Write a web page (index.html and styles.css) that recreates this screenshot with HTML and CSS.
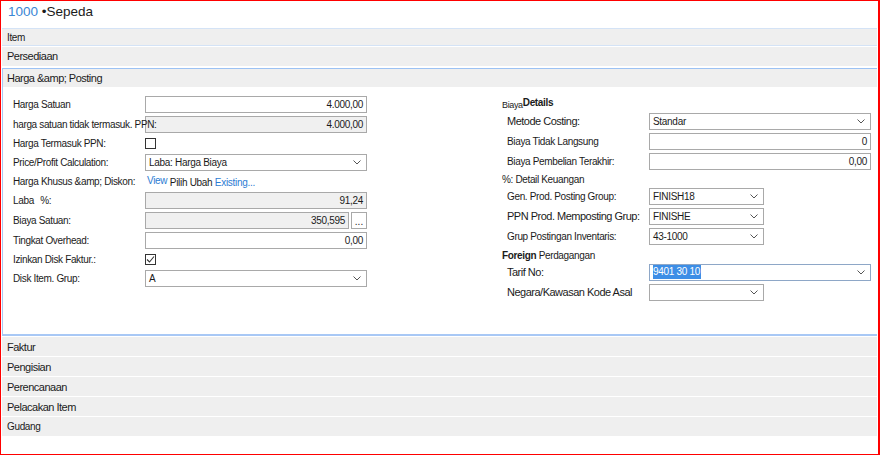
FILE: index.html
```html
<!DOCTYPE html>
<html lang="id">
<head>
  <meta charset="UTF-8" />
  <title>1000 Sepeda</title>
  <link rel="stylesheet" href="styles.css">
</head>
<body>
  <div class="frame">
    <div class="title"><span class="no">1000</span> •Sepeda</div>
    <div class="section small first">Item</div>
    <div class="section split">Persediaan</div>

    <div class="panel">
      <div class="panel-head">Harga &amp;amp; Posting</div>
      <div class="panel-body">
        <!-- left column -->
        <div class="col left">
          <div class="row">
            <span class="label">Harga Satuan</span>
            <div class="field num wide">4.000,00</div>
          </div>
          <div class="row">
            <span class="label over">harga satuan tidak termasuk. PPN:</span>
            <div class="field num wide readonly">4.000,00</div>
          </div>
          <div class="row short">
            <span class="label">Harga Termasuk PPN:</span>
            <span class="check"></span>
          </div>
          <div class="row">
            <span class="label">Price/Profit Calculation:</span>
            <div class="field select wide">Laba: Harga Biaya
              <svg class="chev" width="8" height="5" viewBox="0 0 8 5"><path d="M0.5 0.5L4 4L7.5 0.5" fill="none" stroke="#555" stroke-width="1"/></svg>
            </div>
          </div>
          <div class="row short">
            <span class="label">Harga Khusus &amp;amp; Diskon:</span>
            <span class="links"><span class="link up">View</span> Pilih Ubah <span class="link">Existing...</span></span>
          </div>
          <div class="row">
            <span class="label">Laba <span class="pct">%:</span></span>
            <div class="field num wide readonly">91,24</div>
          </div>
          <div class="row">
            <span class="label">Biaya Satuan:</span>
            <div class="field num mid readonly">350,595</div>
            <span class="dots">...</span>
          </div>
          <div class="row">
            <span class="label">Tingkat Overhead:</span>
            <div class="field num wide">0,00</div>
          </div>
          <div class="row short">
            <span class="label">Izinkan Disk Faktur.:</span>
            <span class="check">
              <svg width="9" height="9" viewBox="0 0 9 9"><path d="M1 4.5L3.5 7L8 1.5" fill="none" stroke="#333" stroke-width="1.1"/></svg>
            </span>
          </div>
          <div class="row">
            <span class="label">Disk Item. Grup:</span>
            <div class="field select wide">A
              <svg class="chev" width="8" height="5" viewBox="0 0 8 5"><path d="M0.5 0.5L4 4L7.5 0.5" fill="none" stroke="#555" stroke-width="1"/></svg>
            </div>
          </div>
        </div>

        <!-- right column -->
        <div class="col right">
          <div class="group"><span class="tiny">Biaya</span><b class="up">Details</b></div>
          <div class="row">
            <span class="label big">Metode Costing:</span>
            <div class="field select wide">Standar
              <svg class="chev" width="8" height="5" viewBox="0 0 8 5"><path d="M0.5 0.5L4 4L7.5 0.5" fill="none" stroke="#555" stroke-width="1"/></svg>
            </div>
          </div>
          <div class="row">
            <span class="label">Biaya Tidak Langsung</span>
            <div class="field num wide">0</div>
          </div>
          <div class="row">
            <span class="label">Biaya Pembelian Terakhir:</span>
            <div class="field num wide">0,00</div>
          </div>
          <div class="group g2">%: Detail Keuangan</div>
          <div class="row">
            <span class="label">Gen. Prod. Posting Group:</span>
            <div class="field select narrow">FINISH18
              <svg class="chev" width="8" height="5" viewBox="0 0 8 5"><path d="M0.5 0.5L4 4L7.5 0.5" fill="none" stroke="#555" stroke-width="1"/></svg>
            </div>
          </div>
          <div class="row">
            <span class="label big">PPN Prod. Memposting Grup:</span>
            <div class="field select narrow">FINISHE
              <svg class="chev" width="8" height="5" viewBox="0 0 8 5"><path d="M0.5 0.5L4 4L7.5 0.5" fill="none" stroke="#555" stroke-width="1"/></svg>
            </div>
          </div>
          <div class="row">
            <span class="label">Grup Postingan Inventaris:</span>
            <div class="field select narrow">43-1000
              <svg class="chev" width="8" height="5" viewBox="0 0 8 5"><path d="M0.5 0.5L4 4L7.5 0.5" fill="none" stroke="#555" stroke-width="1"/></svg>
            </div>
          </div>
          <div class="group g3"><b>Foreign</b> Perdagangan</div>
          <div class="row">
            <span class="label big">Tarif No:</span>
            <div class="field select wide focus"><span class="sel">9401 30 10</span>
              <svg class="chev" width="8" height="5" viewBox="0 0 8 5"><path d="M0.5 0.5L4 4L7.5 0.5" fill="none" stroke="#555" stroke-width="1"/></svg>
            </div>
          </div>
          <div class="row">
            <span class="label big">Negara/Kawasan Kode Asal</span>
            <div class="field select narrow">
              <svg class="chev" width="8" height="5" viewBox="0 0 8 5"><path d="M0.5 0.5L4 4L7.5 0.5" fill="none" stroke="#555" stroke-width="1"/></svg>
            </div>
          </div>
        </div>
      </div>
    </div>

    <div class="section bottom">Faktur</div>
    <div class="section bottom">Pengisian</div>
    <div class="section bottom">Perencanaan</div>
    <div class="section bottom">Pelacakan Item</div>
    <div class="section bottom small">Gudang</div>
  </div>
</body>
</html>
```

FILE: styles.css
```css
body {
  margin: 0;
  font-family: "Liberation Sans", Arial, sans-serif;
  color: #1b1b1b;
  background: #fff;
}
.frame {
  width: 880px;
  height: 455px;
  box-sizing: border-box;
  border: 1px solid #f00;
  border-right-width: 2px;
  padding: 0 1px;
  overflow: hidden;
}
.title {
  height: 27px;
  padding-left: 6px;
  font-size: 13.5px;
  line-height: 22px;
}
.title .no {
  color: #3a86d4;
}

/* collapsed fast tabs */
.section {
  background: #efefef;
  font-size: 11px;
  letter-spacing: -0.5px;
  padding-left: 5px;
  height: 19px;
  line-height: 19px;
}
.section.small {
  font-size: 10px;
  letter-spacing: -0.35px;
}
.section.first {
  border-top: 1px solid #d4e3f6;
  height: 16px;
  line-height: 17px;
}
.section.split {
  border-top: 1px solid #d4e3f6;
  box-shadow: inset 0 1px #fff;
  height: 20px;
  line-height: 21px;
}
.section.bottom {
  margin-top: 1px;
  line-height: 20px;
}

/* expanded fast tab */
.panel {
  margin-top: 2px;
  border-top: 1px solid #9cc2f4;
  border-left: 1px solid #a8c8f5;
  border-bottom: 2px solid #a8c8f5;
}
.panel-head {
  background: #efefef;
  height: 18px;
  line-height: 19px;
  padding-left: 4px;
  font-size: 11px;
  letter-spacing: -0.5px;
}
.panel-body {
  height: 247px;
  display: grid;
  grid-template-columns: 498px 1fr;
}
.col.left {
  padding: 7px 0 0 10px;
}
.col.right {
  padding: 8px 0 0 1px;
}

.row {
  display: flex;
  align-items: center;
  height: 20px;
}
.row.short {
  height: 18px;
}
.col.right .row {
  padding-left: 5px;
}
.label {
  flex-shrink: 0;
  width: 132px;
  font-size: 10px;
  letter-spacing: -0.35px;
  white-space: nowrap;
}
.label.over {
  position: relative;
  z-index: 1;
}
.col.right .label {
  width: 142px;
}
.label.big {
  font-size: 11px;
  letter-spacing: -0.5px;
}
.pct {
  margin-left: 4px;
}

.group {
  display: flex;
  align-items: flex-end;
  height: 16px;
  font-size: 10px;
  letter-spacing: -0.35px;
  line-height: 12px;
  white-space: pre;
}
.group.g2 {
  height: 15px;
}
.group .tiny {
  font-size: 9px;
}
.group .up {
  position: relative;
  top: -2px;
}

/* inputs */
.field {
  box-sizing: border-box;
  height: 17px;
  border: 1px solid #a9a9a9;
  background: #fff;
  font-size: 10px;
  letter-spacing: -0.3px;
  padding: 0 3px;
  display: flex;
  align-items: center;
  white-space: nowrap;
}
.field.num {
  justify-content: flex-end;
}
.field.readonly {
  background: #f0f0f0;
}
.field.wide {
  width: 222px;
}
.field.mid {
  width: 204px;
}
.field.narrow {
  width: 115px;
}
.field.select {
  padding-right: 5px;
}
.field .chev {
  margin-left: auto;
}
.field.focus {
  border-color: #8ea7c7;
}
.sel {
  background: #3d8ee6;
  color: #fff;
  line-height: 14px;
  padding-right: 1px;
}

.dots {
  box-sizing: border-box;
  width: 16px;
  height: 17px;
  margin-left: 2px;
  border: 1px solid #a9a9a9;
  background: #fff;
  font-size: 10px;
  text-align: center;
  line-height: 17px;
}

.check {
  box-sizing: border-box;
  width: 11px;
  height: 11px;
  border: 1px solid #333;
  background: #fff;
  display: flex;
  align-items: center;
  justify-content: center;
}

.links {
  font-size: 10px;
  letter-spacing: -0.3px;
  margin-left: 2px;
}
.link {
  color: #2b7cd3;
}
.link.up {
  vertical-align: 2px;
}
```
